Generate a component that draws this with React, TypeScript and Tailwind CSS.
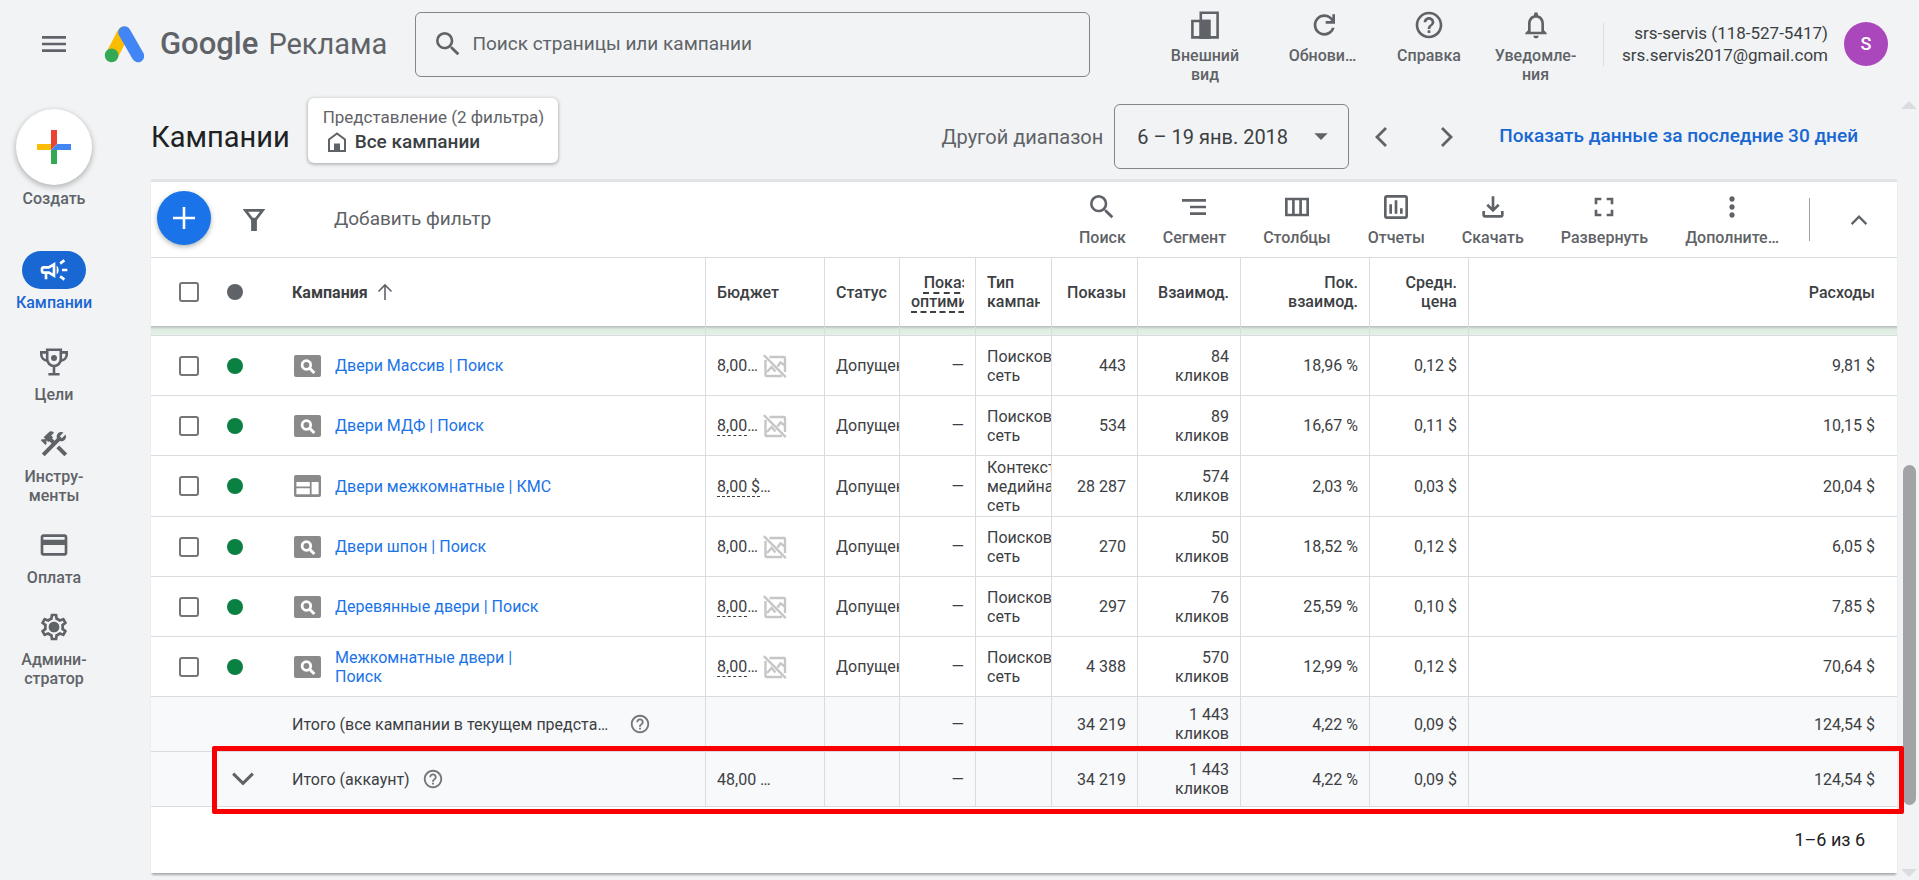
import type { ReactNode } from 'react';
import {
  MdArrowDropDown,
  MdCreditCard,
  MdConstruction,
  MdFullscreen,
  MdHelpOutline,
  MdMenu,
  MdMoreVert,
  MdOutlineCampaign,
  MdOutlineInsertChart,
  MdOutlineNotifications,
  MdOutlineSettings,
  MdSearch,
  MdSegment,
} from 'react-icons/md';

const campaigns = [
  { name: 'Двери Массив | Поиск', budget: '8,00', dashed: false, display: false, type: 'Поисковая сеть', shows: '443', clicks: '84', rate: '18,96 %', price: '0,12 $', cost: '9,81 $' },
  { name: 'Двери МДФ | Поиск', budget: '8,00', dashed: true, display: false, type: 'Поисковая сеть', shows: '534', clicks: '89', rate: '16,67 %', price: '0,11 $', cost: '10,15 $' },
  { name: 'Двери межкомнатные | КМС', budget: '8,00 $', dashed: true, display: true, type: 'Контекстно-медийная сеть', shows: '28 287', clicks: '574', rate: '2,03 %', price: '0,03 $', cost: '20,04 $' },
  { name: 'Двери шпон | Поиск', budget: '8,00', dashed: false, display: false, type: 'Поисковая сеть', shows: '270', clicks: '50', rate: '18,52 %', price: '0,12 $', cost: '6,05 $' },
  { name: 'Деревянные двери | Поиск', budget: '8,00', dashed: true, display: false, type: 'Поисковая сеть', shows: '297', clicks: '76', rate: '25,59 %', price: '0,10 $', cost: '7,85 $' },
  { name: 'Межкомнатные двери | Поиск', budget: '8,00', dashed: true, display: false, type: 'Поисковая сеть', shows: '4 388', clicks: '570', rate: '12,99 %', price: '0,12 $', cost: '70,64 $' },
];

function AdsLogo() {
  return (
    <svg viewBox="0 0 40 38" className="h-[38px] w-10 shrink-0" fill="none" strokeLinecap="round" strokeWidth="12.5">
      <path d="M19.5 8 8 30" stroke="#fbbc04" />
      <path d="M20.5 7.5 34 31" stroke="#4285f4" />
      <circle cx="7.6" cy="30.4" r="6.8" fill="#34a853" />
    </svg>
  );
}

function CreateIcon() {
  return (
    <svg viewBox="0 0 34 34" className="size-[34px]">
      <path d="M14 0h6v14l-6 6z" fill="#ea4335" />
      <path d="M0 14h14v6H0z" fill="#fbbc04" />
      <path d="M14 20h6v14h-6z" fill="#34a853" />
      <path d="M20 14h14v6H14z" fill="#4285f4" />
    </svg>
  );
}

function AppearanceIcon() {
  return (
    <svg viewBox="0 0 28 28" className="size-7" fill="none" stroke="currentColor" strokeWidth="2.6">
      <path d="M9.8 1.8h16.8v24.6H9.8z" />
      <path d="M1.4 10h16.8v16.4H1.4z" />
      <path d="M9.8 10h8.4v16.4H9.8z" fill="currentColor" />
    </svg>
  );
}

function RefreshIcon() {
  return (
    <svg viewBox="-1 0 24 24" className="size-8" fill="currentColor">
      <path d="M12 20q-3.35 0-5.675-2.325T4 12q0-3.35 2.325-5.675T12 4q1.725 0 3.3.712T18 6.75V4h2v7h-7V9h4.2q-.8-1.4-2.187-2.2T12 6Q9.5 6 7.75 7.75T6 12q0 2.5 1.75 4.25T12 18q1.925 0 3.475-1.1T17.65 14h2.1q-.7 2.65-2.85 4.325T12 20" />
    </svg>
  );
}

function TrophyIcon() {
  return (
    <svg viewBox="0 0 28 28" className="size-7" fill="none" stroke="currentColor" strokeWidth="2.6">
      <path d="M7.2 1.7h13.6v9.5a6.8 6.8 0 0 1-13.6 0z" />
      <path d="M7.2 4.4H1.3v2.4c0 3.2 2.6 5.6 6.4 6M20.8 4.4h5.9v2.4c0 3.2-2.6 5.6-6.4 6" />
      <path d="M14 18v8M8.4 26.2h11.2" />
      <circle cx="14" cy="10" r="3" fill="currentColor" stroke="none" />
    </svg>
  );
}

function GearIcon() {
  return (
    <span className="relative flex">
      <MdOutlineSettings className="size-8" />
      <span className="absolute top-[11px] left-[11px] size-[10px] rounded-full bg-current" />
    </span>
  );
}

function FunnelIcon() {
  return (
    <svg viewBox="0 0 22 22" className="size-[22px]" fill="none" stroke="currentColor" strokeWidth="2.6">
      <path d="M2.4 1.4h17.2l-7 9.2h-3.2z" />
      <path d="M9.4 10h3.2v10.6H9.4z" fill="currentColor" />
    </svg>
  );
}

function ColumnsIcon() {
  return (
    <svg viewBox="0 0 24 24" className="size-8" fill="none" stroke="currentColor" strokeWidth="2">
      <path d="M4 6h16v12H4zM9.3 6v12M14.7 6v12" />
    </svg>
  );
}

function DownloadIcon() {
  return (
    <svg viewBox="0 0 24 24" className="size-8" fill="currentColor">
      <path d="M12 16 7 11l1.4-1.45 2.6 2.6V4h2v8.15l2.6-2.6L17 11zm-6 4q-.825 0-1.412-.587T4 18v-3h2v3h12v-3h2v3q0 .825-.587 1.413T18 20z" />
    </svg>
  );
}

function HomeIcon() {
  return (
    <svg viewBox="0 0 20 20" className="size-5" fill="none" stroke="currentColor" strokeWidth="2">
      <path d="M2 7.5 10 1.4l8 6.1V19H2z" />
      <path d="M7 11.5h6V19H7z" fill="currentColor" stroke="none" />
    </svg>
  );
}

function SearchCampaignIcon() {
  return (
    <svg viewBox="0 0 27 22" className="h-[22px] w-[27px] shrink-0">
      <rect width="27" height="22" rx="2" fill="#8a8a8a" />
      <circle cx="12.4" cy="10" r="4.3" fill="none" stroke="#fff" strokeWidth="2.8" />
      <path d="m15.4 13 5 5" stroke="#fff" strokeWidth="3" />
    </svg>
  );
}

function DisplayCampaignIcon() {
  return (
    <svg viewBox="0 0 27 22" className="h-[22px] w-[27px] shrink-0">
      <rect width="27" height="22" rx="2" fill="#8a8a8a" />
      <path d="M2.4 7h13.4v4.4H2.4zM2.4 13.2h13.4v6H2.4zM17.6 7h7v12.2h-7z" fill="#fff" />
    </svg>
  );
}

function NoImageIcon() {
  return (
    <svg viewBox="0 0 24 24" className="size-6" fill="none" stroke="#c6c6c6" strokeWidth="2.4">
      <path d="M6.5 3H21a1 1 0 0 1 1 1v14M2.5 6v15a1 1 0 0 0 1 1H19" />
      <path d="m4 18 4.5-5 4 4.5M14.5 12.5l3-4L22 11.5" />
      <path d="m.8 1.2 22 22" />
    </svg>
  );
}

function Chevron({ dir, className }: { dir: 'up' | 'down' | 'left' | 'right'; className: string }) {
  const points = {
    up: 'M2 16 11 7l9 9',
    down: 'M2 6l9 9 9-9',
    left: 'M16 2 7 11l9 9',
    right: 'M6 2l9 9-9 9',
  };
  return (
    <svg viewBox="0 0 22 22" className={className} fill="none" stroke="currentColor" strokeWidth="2.8">
      <path d={points[dir]} />
    </svg>
  );
}

function TopAction({ icon, label, width }: { icon: ReactNode; label: ReactNode; width: string }) {
  return (
    <button className={`flex flex-col items-center ${width}`}>
      <span className="flex h-8 items-center">{icon}</span>
      <span className="mt-[5px] text-base leading-[19px] font-medium">{label}</span>
    </button>
  );
}

function SideItem({ icon, label }: { icon: ReactNode; label: ReactNode }) {
  return (
    <a href="#" className="mb-6 flex flex-col items-center">
      <span className="flex h-8 items-center">{icon}</span>
      <span className="mt-[7px] text-center text-base leading-[19px] font-medium">{label}</span>
    </a>
  );
}

function ToolButton({ icon, label }: { icon: ReactNode; label: string }) {
  return (
    <button className="flex flex-col items-center">
      <span className="flex h-8 items-center">{icon}</span>
      <span className="mt-[5px] text-base leading-5 font-medium">{label}</span>
    </button>
  );
}

function Checkbox({ label }: { label: string }) {
  return (
    <input
      type="checkbox"
      aria-label={label}
      className="block size-5 appearance-none rounded-[3px] border-2 border-[#757575] bg-white"
    />
  );
}

const th = 'border-r border-[#dadce0] px-[11px] font-medium';
const td = 'overflow-hidden border-r border-b border-[#dadce0]';

function TotalRow({ toggle, label, budget }: { toggle?: boolean; label: string; budget?: string }) {
  return (
    <tr className="h-[55px] bg-[#f8f9fa]">
      <td className="border-b border-[#dadce0]"></td>
      <td className="border-b border-[#dadce0] pl-5">
        {toggle && (
          <button aria-label="Развернуть итоги" className="flex text-[#5f6368]">
            <Chevron dir="down" className="size-6" />
          </button>
        )}
      </td>
      <td className={`${td} pl-[11px]`}>
        <div className="flex items-center">
          <span className="max-w-[325px] truncate">{label}</span>
          <MdHelpOutline className="ml-3 size-[22px] text-[#757575]" />
        </div>
      </td>
      <td className={`${td} pl-[11px]`}>{budget}</td>
      <td className={td}></td>
      <td className={`${td} pr-[11px] text-right`}>—</td>
      <td className={td}></td>
      <td className={`${td} pr-[11px] text-right`}>34 219</td>
      <td className={`${td} pr-[11px] text-right`}>1 443<br />кликов</td>
      <td className={`${td} pr-[11px] text-right`}>4,22 %</td>
      <td className={`${td} pr-[11px] text-right`}>0,09 $</td>
      <td className="border-b border-[#dadce0] pr-[22px] text-right">124,54 $</td>
    </tr>
  );
}

export default function App() {
  return (
    <div className="flex min-h-screen flex-col bg-[#f1f3f4] font-['Roboto',sans-serif] text-[#5f6368]">
      <header className="flex h-22 items-center pr-[31px] pl-[38px]">
        <button aria-label="Главное меню">
          <MdMenu className="size-8" />
        </button>
        <a href="#" className="ml-[34px] flex items-center">
          <AdsLogo />
          <span className="ml-4 flex items-baseline gap-[10px] leading-9 whitespace-nowrap">
            <span className="text-[31px] font-medium">Google</span>
            <span className="text-[29px]">Реклама</span>
          </span>
        </a>
        <label className="ml-7 flex h-[65px] w-[675px] shrink items-center rounded-md border border-[#80868b] pl-4">
          <MdSearch className="size-8 shrink-0" />
          <input
            type="text"
            aria-label="Поиск страницы или кампании"
            placeholder="Поиск страницы или кампании"
            className="ml-2 w-full bg-transparent text-[19px] outline-none placeholder:text-[#5f6368]"
          />
        </label>
        <div className="ml-auto flex items-start self-start pt-[9px]">
          <TopAction width="w-[128px]" icon={<AppearanceIcon />} label={<>Внешний<br />вид</>} />
          <TopAction width="w-[107px]" icon={<RefreshIcon />} label="Обнови…" />
          <TopAction width="w-[106px]" icon={<MdHelpOutline className="size-8" />} label="Справка" />
          <TopAction width="w-[107px]" icon={<MdOutlineNotifications className="size-8" />} label={<>Уведомле-<br />ния</>} />
        </div>
        <div className="ml-[14px] flex h-[43px] items-center gap-4 border-l border-[#dadce0]">
          <div className="w-[224px] text-right text-[17px] leading-[22px] text-[#3c4043]">
            srs-servis (118-527-5417)
            <br />
            srs.servis2017@gmail.com
          </div>
          <button className="size-11 rounded-full bg-[#ab47bc] text-lg font-medium text-white">S</button>
        </div>
      </header>

      <div className="flex flex-1">
        <nav className="w-[151px] shrink-0 pt-[21px]">
          <div className="flex w-[108px] flex-col items-stretch">
            <button className="mb-[43px] flex flex-col items-center">
              <span className="flex size-[76px] items-center justify-center rounded-full bg-white shadow-[0_2px_5px_1px_rgba(60,64,67,0.3)]">
                <CreateIcon />
              </span>
              <span className="mt-1 text-base leading-[19px] font-medium">Создать</span>
            </button>
            <a href="#" className="mb-[34px] flex flex-col items-center text-[#1967d2]">
              <span className="flex h-[38px] w-16 items-center justify-center rounded-full bg-[#1967d2] text-white">
                <MdOutlineCampaign className="size-8" />
              </span>
              <span className="mt-1 text-base leading-[19px] font-medium">Кампании</span>
            </a>
            <SideItem icon={<TrophyIcon />} label="Цели" />
            <SideItem icon={<MdConstruction className="size-8" />} label={<>Инстру-<br />менты</>} />
            <SideItem icon={<MdCreditCard className="size-8" />} label="Оплата" />
            <SideItem icon={<GearIcon />} label={<>Админи-<br />стратор</>} />
          </div>
        </nav>

        <main className="min-w-0 flex-1">
          <div className="flex items-center pt-4 pr-[39px] pb-[10px]">
            <h1 className="text-[29px] leading-9 text-[#202124]">Кампании</h1>
            <button className="-mt-3 ml-[18px] h-[65px] w-[250px] rounded-md bg-white pl-[15px] text-left shadow-[0_1px_3px_1px_rgba(60,64,67,0.3)]">
              <span className="block text-[17px] leading-5">Представление (2 фильтра)</span>
              <span className="mt-[3px] flex items-center gap-2 pl-1 text-[19px] leading-6 font-medium text-[#3c4043]">
                <span className="text-[#5f6368]"><HomeIcon /></span>
                Все кампании
              </span>
            </button>
            <label htmlFor="range" className="ml-auto text-xl">Другой диапазон</label>
            <div className="relative ml-[11px]">
              <select
                id="range"
                className="h-[65px] w-[235px] appearance-none rounded-md border border-[#80868b] bg-transparent pl-[22px] text-xl text-[#3c4043]"
              >
                <option>6 – 19 янв. 2018</option>
              </select>
              <MdArrowDropDown className="pointer-events-none absolute top-4 right-3 size-8" />
            </div>
            <button aria-label="Предыдущий период" className="ml-[21px]">
              <Chevron dir="left" className="size-[22px]" />
            </button>
            <button aria-label="Следующий период" className="ml-[44px]">
              <Chevron dir="right" className="size-[22px]" />
            </button>
            <a href="#" className="ml-[41px] text-[19px] font-medium text-[#1967d2]">
              Показать данные за последние 30 дней
            </a>
          </div>

          <section className="mb-[7px] border-t-3 border-[#e1e3e5] bg-white shadow-[0_3px_2px_-1px_rgba(60,64,67,0.4)]">
            <div className="flex h-[76px] items-center border-b border-[#dadce0] pl-[6px]">
              <button
                aria-label="Создать кампанию"
                className="-mt-1 flex size-[54px] items-center justify-center rounded-full bg-[#1a73e8] shadow-[0_2px_5px_rgba(60,64,67,0.4)]"
              >
                <svg viewBox="0 0 22 22" className="size-[22px]" stroke="#fff" strokeWidth="2.6">
                  <path d="M11 0v22M0 11h22" />
                </svg>
              </button>
              <button aria-label="Фильтр" className="ml-8">
                <FunnelIcon />
              </button>
              <button className="ml-[69px] text-[19px]">Добавить фильтр</button>
              <div className="ml-auto flex gap-[37px] pr-[30px]">
                <ToolButton icon={<MdSearch className="size-8" />} label="Поиск" />
                <ToolButton icon={<MdSegment className="size-8" />} label="Сегмент" />
                <ToolButton icon={<ColumnsIcon />} label="Столбцы" />
                <ToolButton icon={<MdOutlineInsertChart className="size-8" />} label="Отчеты" />
                <ToolButton icon={<DownloadIcon />} label="Скачать" />
                <ToolButton icon={<MdFullscreen className="size-8" />} label="Развернуть" />
                <ToolButton icon={<MdMoreVert className="size-8" />} label="Дополните…" />
              </div>
              <div className="h-[43px] w-px bg-[#9aa0a6]" />
              <button aria-label="Свернуть" className="mr-[29px] ml-10">
                <Chevron dir="up" className="size-[18px]" />
              </button>
            </div>

            <div className="relative">
              <table className="w-full table-fixed border-separate border-spacing-0 text-base leading-[19px] text-[#3c4043]">
                <colgroup>
                  <col className="w-[60px]" />
                  <col className="w-[70px]" />
                  <col className="w-[425px]" />
                  <col className="w-[119px]" />
                  <col className="w-[75px]" />
                  <col className="w-[76px]" />
                  <col className="w-[76px]" />
                  <col className="w-[86px]" />
                  <col className="w-[103px]" />
                  <col className="w-[129px]" />
                  <col className="w-[99px]" />
                  <col />
                </colgroup>
                <thead>
                  <tr className="h-[68px] text-left">
                    <th className="pl-7"><Checkbox label="Выбрать все кампании" /></th>
                    <th className="pl-4"><span className="block size-4 rounded-full bg-[#5f6368]" /></th>
                    <th className="border-r border-[#dadce0] pl-[11px] font-bold">
                      <button className="flex items-center gap-2">
                        Кампания
                        <svg viewBox="0 0 18 18" className="size-[18px]" fill="none" stroke="#5f6368" strokeWidth="1.6">
                          <path d="M9 17V2M2.5 8.5 9 2l6.5 6.5" />
                        </svg>
                      </button>
                    </th>
                    <th className={th}>Бюджет</th>
                    <th className={th}>Статус</th>
                    <th className={th}>
                      <div className="overflow-hidden py-1">
                        <div className="w-max text-right underline decoration-dashed decoration-2 underline-offset-4">
                          Показатель<br />оптимизации
                        </div>
                      </div>
                    </th>
                    <th className={th}><div className="overflow-hidden">Тип<br />кампании</div></th>
                    <th className={`${th} text-right`}>Показы</th>
                    <th className={`${th} text-right`}>Взаимод.</th>
                    <th className={`${th} text-right`}>Пок.<br />взаимод.</th>
                    <th className={`${th} text-right`}>Средн.<br />цена</th>
                    <th className="pr-[22px] text-right font-medium">Расходы</th>
                  </tr>
                </thead>
                <tbody>
                  <tr className="h-[10px] bg-linear-to-b from-[#b4baba] via-[#dcebe0] via-30% to-[#e6f4ea]">
                    <td colSpan={3} className={td}></td>
                    {Array.from({ length: 8 }, (_, i) => (
                      <td key={i} className={td}></td>
                    ))}
                    <td className="border-b border-[#dadce0]"></td>
                  </tr>
                  {campaigns.map((c) => (
                    <tr key={c.name} className="h-[60px]">
                      <td className="border-b border-[#dadce0] pl-7"><Checkbox label={c.name} /></td>
                      <td className="border-b border-[#dadce0] pl-4">
                        <span className="block size-4 rounded-full bg-[#0b8043]" />
                      </td>
                      <td className={`${td} pl-[13px]`}>
                        <div className="flex items-center gap-[14px]">
                          {c.display ? <DisplayCampaignIcon /> : <SearchCampaignIcon />}
                          <a href="#" className="max-w-[220px] text-[#1a73e8]">{c.name}</a>
                        </div>
                      </td>
                      <td className={`${td} pl-[11px]`}>
                        <div className="flex items-center gap-[5px]">
                          <span className="whitespace-nowrap">
                            <span className={c.dashed ? 'border-b border-dashed border-[#3c4043]' : ''}>{c.budget}</span>…
                          </span>
                          {!c.display && <NoImageIcon />}
                        </div>
                      </td>
                      <td className={`${td} pl-[11px]`}>Допущена</td>
                      <td className={`${td} pr-[11px] text-right`}>—</td>
                      <td className={`${td} pt-[2px] pb-px pl-[11px]`}>{c.type}</td>
                      <td className={`${td} pr-[11px] text-right`}>{c.shows}</td>
                      <td className={`${td} pr-[11px] text-right`}>{c.clicks}<br />кликов</td>
                      <td className={`${td} pr-[11px] text-right`}>{c.rate}</td>
                      <td className={`${td} pr-[11px] text-right`}>{c.price}</td>
                      <td className="border-b border-[#dadce0] pr-[22px] text-right">{c.cost}</td>
                    </tr>
                  ))}
                  <TotalRow label="Итого (все кампании в текущем представлении)" />
                  <TotalRow toggle label="Итого (аккаунт)" budget="48,00 …" />
                </tbody>
              </table>
              {/* highlight frame around the account total */}
              <div className="pointer-events-none absolute -right-[7px] -bottom-[7px] left-[61px] z-10 h-[68px] rounded-[2px] border-5 border-[#f90000]" />
            </div>

            <div className="flex h-[66px] items-center justify-end pr-8 text-lg text-[#202124]">1–6 из 6</div>
          </section>
        </main>

        <div className="flex w-[22px] shrink-0 flex-col items-center pt-[13px] pb-[3px] pl-[2px]">
          <div className="border-x-8 border-b-8 border-x-transparent border-b-[#dadce0]" />
          <div className="grow-[356]" />
          <div className="w-[13px] grow-[341] rounded-full bg-[#a1a3a7]" />
          <div className="grow-[64]" />
          <div className="border-x-8 border-t-8 border-x-transparent border-t-[#dadce0]" />
        </div>
      </div>
    </div>
  );
}
